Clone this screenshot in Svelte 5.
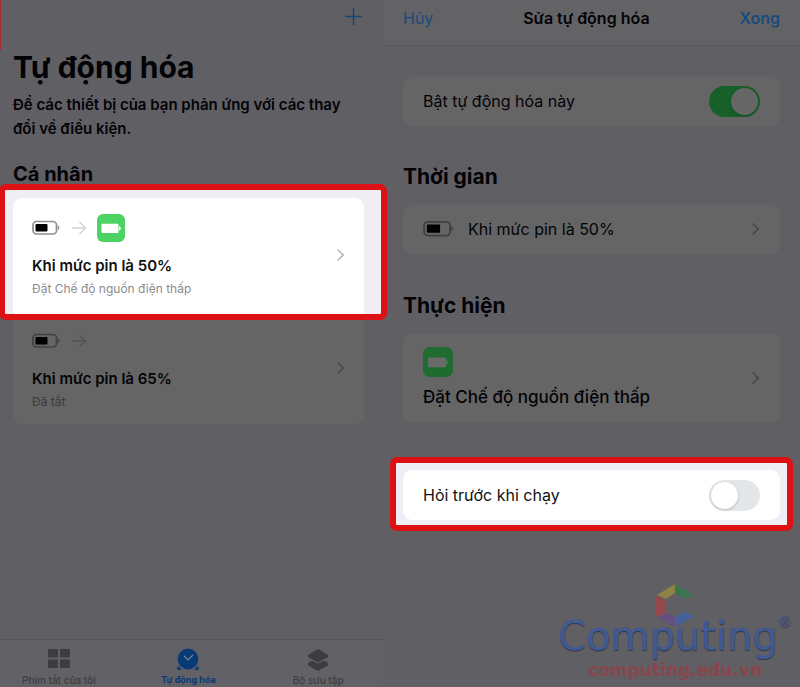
<script>
  let enabled = $state(true);
  let ask = $state(false);
</script>

{#snippet battery()}
  <svg class="battery" viewBox="0 0 29 16" aria-hidden="true">
    <rect x="1" y="1.5" width="23.5" height="12.5" rx="3.5" fill="none" stroke="currentColor" stroke-width="1.7" />
    <rect x="3.5" y="4" width="12" height="7.5" rx="1" fill="#000" />
    <path d="M26 5.6q2.4 2.1 0 4.3z" fill="currentColor" stroke="currentColor" stroke-width=".5" />
  </svg>
{/snippet}

{#snippet arrow()}
  <svg class="arrow" width="16" height="14" viewBox="0 0 16 14" aria-hidden="true">
    <path d="M1 7h13.5M8.5 1l6 6-6 6" fill="none" stroke="currentColor" stroke-width="1.3" />
  </svg>
{/snippet}

{#snippet power()}
  <svg class="power" viewBox="0 0 28 28" aria-hidden="true">
    <rect width="28" height="28" rx="6" fill="currentColor" />
    <rect class="cell" x="4.5" y="9.8" width="17" height="9.2" rx="1" />
    <path class="cell" d="M22 12q4 2.4 0 4.800z" />
  </svg>
{/snippet}

{#snippet chevron()}
  <svg class="chevron" width="9" height="14" viewBox="0 0 9 14" aria-hidden="true">
    <path d="M1.500 1.500L7.200 7l-5.700 5.500" fill="none" stroke="currentColor" stroke-width="1.6" />
  </svg>
{/snippet}

<div class="page">
  <main class="list">
    <div class="edge"></div>
    <header class="top">
      <button aria-label="Thêm">
        <svg width="17" height="17" viewBox="0 0 17 17"><path d="M8.5 0v17M0 8.5h17" stroke="currentColor" stroke-width="1.5" /></svg>
      </button>
    </header>
    <h1>Tự động hóa</h1>
    <p class="intro">Để các thiết bị của bạn phản ứng với các thay đổi về điều kiện.</p>
    <h2>Cá nhân</h2>
    <div class="focus">
      <button class="item lit">
        <span class="body">
          <span class="icons">{@render battery()}{@render arrow()}{@render power()}</span>
          <span class="name">Khi mức pin là 50%</span>
          <span class="note">Đặt Chế độ nguồn điện thấp</span>
        </span>
        {@render chevron()}
      </button>
    </div>
    <button class="item rest">
      <span class="body">
        <span class="icons">{@render battery()}{@render arrow()}</span>
        <span class="name">Khi mức pin là 65%</span>
        <span class="note">Đã tắt</span>
      </span>
      {@render chevron()}
    </button>
    <nav>
      <div class="tabs">
        <a href="#shortcuts">
          <svg width="24" height="22" viewBox="0 0 24 22" fill="currentColor" aria-hidden="true">
            <rect x="1" y="1" width="10" height="8.5" rx="1" /><rect x="13" y="1" width="10" height="8.5" rx="1" />
            <rect x="1" y="11.5" width="10" height="8.5" rx="1" /><rect x="13" y="11.5" width="10" height="8.5" rx="1" />
          </svg>
          Phím tắt của tôi
        </a>
        <a href="#automation" class="current">
          <svg width="24" height="22" viewBox="0 0 24 22" aria-hidden="true">
            <circle cx="12" cy="11" r="10.4" fill="currentColor" />
            <path d="M1.5 21.5l.8-3 3 2.6zM22.5 21.5l-.8-3-3 2.6z" fill="currentColor" stroke="currentColor" />
            <path d="M8 7.800l4 4 5-5" fill="none" stroke="#76889c" stroke-width="1.2" />
          </svg>
          <b>Tự động hóa</b>
        </a>
        <a href="#gallery">
          <svg width="24" height="24" viewBox="0 0 24 24" aria-hidden="true">
            <g fill="currentColor" stroke="currentColor" stroke-width="2" stroke-linejoin="round">
              <path d="M3 15.500l2-1.500h14l2 1.500v1.500l-9 5-9-5z" />
              <path d="M12 2l9 5.500v1L12 13.500 3 8.500V7.500z" stroke="#626266" stroke-width="4" />
              <path d="M12 2l9 5.500v1L12 13.500 3 8.500V7.500z" />
            </g>
          </svg>
          Bộ sưu tập
        </a>
      </div>
    </nav>
  </main>

  <section class="editor">
    <header class="bar">
      <button>Hủy</button>
      <h3>Sửa tự động hóa</h3>
      <button class="done">Xong</button>
    </header>
    <div class="content">
      <label class="card switch">
        Bật tự động hóa này
        <input type="checkbox" role="switch" bind:checked={enabled} />
      </label>
      <h2>Thời gian</h2>
      <button class="card trigger">
        {@render battery()}
        <span>Khi mức pin là 50%</span>
        {@render chevron()}
      </button>
      <h2>Thực hiện</h2>
      <button class="card action">
        <span class="body">
          {@render power()}
          <span class="name">Đặt Chế độ nguồn điện thấp</span>
        </span>
        {@render chevron()}
      </button>
      <div class="focus">
        <label class="card switch lit">
          Hỏi trước khi chạy
          <input type="checkbox" role="switch" bind:checked={ask} />
        </label>
      </div>
    </div>
  </section>

  <aside class="mark">
    <svg width="40" height="45" viewBox="0 0 40 45" aria-hidden="true">
      <path d="M2 12L20 1v9l-9 6z" fill="#8f8244" />
      <path d="M20 1l19 11-9 4-10-6z" fill="#3d7551" />
      <path d="M1 13l9 4v13L1 34z" fill="#95494a" />
      <path d="M2 34l9-4 9 4v10z" fill="#65507d" />
      <path d="M20 34l9-5 10 4-19 11z" fill="#45609d" />
    </svg>
    <div class="brand">Computing<sup>®</sup></div>
    <div class="site">computing.edu.vn</div>
  </aside>
</div>

<style>
  :global(body) {
    margin: 0;
    background: #605f64;
  }
  .page {
    position: relative;
    display: flex;
    min-height: 100vh;
    overflow: hidden;
    background: #605f64;
    color: #030307;
    font-family: Inter, "Noto Sans", sans-serif;
    font-size: 16px;
  }
  button {
    padding: 0;
    border: 0;
    background: none;
    color: inherit;
    font: inherit;
    text-align: left;
    cursor: pointer;
  }
  svg {
    display: block;
    flex: none;
  }
  h1, h2, h3, p {
    margin: 0;
  }
  .list {
    position: relative;
    z-index: 1;
    flex: 383;
    min-width: 0;
    display: flex;
    flex-direction: column;
  }
  .edge {
    position: absolute;
    left: 0;
    top: 0;
    width: 1px;
    height: 50px;
    background: #a52c2e;
  }
  .top {
    display: flex;
    justify-content: flex-end;
    align-items: flex-start;
    padding: 8px 21px 0 0;
    height: 37px;
    box-sizing: border-box;
    color: #16447a;
  }
  h1 {
    padding: 10px 13px 0;
    font-size: 30px;
    line-height: 40px;
    font-weight: 700;
  }
  .intro {
    padding: 6px 32px 0 13px;
    font-size: 15px;
    line-height: 24px;
    font-weight: 600;
  }
  h2 {
    font-size: 21px;
    line-height: 28px;
    font-weight: 700;
  }
  .list h2 {
    padding: 19px 13px 0;
    height: 24px;
    font-size: 20px;
    line-height: 28px;
  }
  .focus {
    border: 6px solid #dd1114;
    border-radius: 7px;
    background: #f0edf5;
  }
  .list .focus {
    margin: 0 -4px 0 -1px;
    padding: 8px 17px 0 8px;
  }
  .item {
    display: flex;
    align-items: center;
    justify-content: space-between;
    box-sizing: border-box;
    padding: 0 19px;
  }
  .body {
    display: flex;
    flex-direction: column;
    align-items: flex-start;
  }
  .item.lit {
    width: 100%;
    height: 116px;
    padding-bottom: 3px;
    border-radius: 9px 9px 0 0;
    color: #111;
  }
  .lit {
    background: #fff;
  }
  .lit .body {
    padding-top: 4px;
  }
  .item.rest {
    height: 104px;
    margin: 0 19px 0 13px;
    padding-bottom: 8px;
    border-radius: 0 0 9px 9px;
    background: #656565;
  }
  .rest .body {
    padding-top: 8px;
  }
  .icons {
    display: flex;
    align-items: center;
    gap: 10px;
    height: 30px;
  }
  .rest .icons {
    height: 20px;
  }
  .name {
    font-weight: 600;
    line-height: 24px;
  }
  .item .name {
    padding-top: 11px;
    font-size: 15px;
  }
  .rest .name {
    padding-top: 16px;
  }
  .note {
    font-size: 12px;
    line-height: 22px;
    color: #3a3a3c;
  }
  .lit .note {
    color: #8b8b8f;
  }
  .battery {
    width: 29px;
    height: 16px;
    color: #414143;
  }
  .lit .battery {
    color: #8e8e90;
  }
  .arrow {
    color: #525254;
  }
  .lit .arrow {
    color: #d2d2d4;
  }
  .power {
    width: 28px;
    height: 28px;
    color: #1f6b30;
  }
  .lit .power {
    color: #4cd364;
  }
  .cell {
    fill: #686b68;
  }
  .lit .cell {
    fill: #fff;
  }
  .chevron {
    color: #48484a;
  }
  .lit .chevron {
    color: #b9b9bd;
  }
  nav {
    margin-top: auto;
    height: 48px;
    box-sizing: border-box;
    border-top: 1px solid #545458;
    background: #626266;
  }
  .tabs {
    display: grid;
    grid-template-columns: repeat(3, 1fr);
    margin-left: -6px;
    padding-top: 8px;
  }
  .tabs a {
    display: flex;
    flex-direction: column;
    align-items: center;
    height: 39px;
    justify-content: space-between;
    color: #3d3d40;
    font-size: 10px;
    line-height: 14px;
    font-weight: 500;
    text-decoration: none;
  }
  .tabs .current {
    color: #083a76;
  }
  .tabs b {
    font-size: 9px;
  }
  .editor {
    flex: 417;
    min-width: 0;
  }
  .bar {
    display: flex;
    align-items: center;
    justify-content: space-between;
    height: 46px;
    box-sizing: border-box;
    padding: 0 20px 10px;
    border-bottom: 1px solid #58585c;
    background: #636366;
    color: #1a4a7c;
  }
  h3 {
    font-size: 16px;
    font-weight: 600;
    color: #030307;
  }
  .done {
    font-weight: 600;
  }
  .content {
    display: flex;
    flex-direction: column;
    padding: 30px 20px 0;
  }
  .card {
    display: flex;
    align-items: center;
    justify-content: space-between;
    box-sizing: border-box;
    min-height: 50px;
    padding: 0 20px;
    border-radius: 9px;
    background: #656565;
  }
  .card.lit {
    background: #fff;
    color: #111;
  }
  .content h2 {
    padding: 37px 0 13px;
  }
  .trigger {
    justify-content: flex-start;
    gap: 13px;
  }
  .trigger .battery {
    width: 32px;
    height: 18px;
  }
  .trigger .chevron {
    margin-left: auto;
  }
  .trigger + h2 {
    padding-top: 38px;
  }
  .action {
    height: 90px;
  }
  .action .power {
    width: 30px;
    height: 30px;
  }
  .action .name {
    padding-top: 8px;
    font-size: 17px;
    font-weight: 500;
  }
  .content .focus {
    margin: 34px -13px 0;
    padding: 7px 7px 5px;
  }
  input {
    appearance: none;
    display: flex;
    width: 51px;
    height: 31px;
    box-sizing: border-box;
    margin: 0;
    padding: 2px;
    border-radius: 16px;
    background: #e4e7e9;
    cursor: pointer;
  }
  input::before {
    content: "";
    width: 27px;
    height: 27px;
    border-radius: 50%;
    background: #fff;
    box-shadow: 0 1px 3px #0003;
  }
  input:checked {
    justify-content: flex-end;
    background: #17602a;
  }
  input:checked::before {
    background: #666;
  }
  .mark {
    position: absolute;
    right: 8px;
    bottom: 7px;
    display: flex;
    flex-direction: column;
    align-items: center;
    font-family: "DejaVu Sans", sans-serif;
  }
  .mark svg {
    margin-bottom: -6px;
  }
  .brand {
    display: flex;
    color: #405a92;
    font-size: 40px;
    line-height: 28px;
    text-shadow: 0 1px 1px #334;
  }
  sup {
    font-size: 14px;
    line-height: 0;
  }
  .site {
    padding-top: 10px;
    color: #87474b;
    font-size: 17px;
    line-height: 20px;
    font-weight: 700;
  }
</style>
